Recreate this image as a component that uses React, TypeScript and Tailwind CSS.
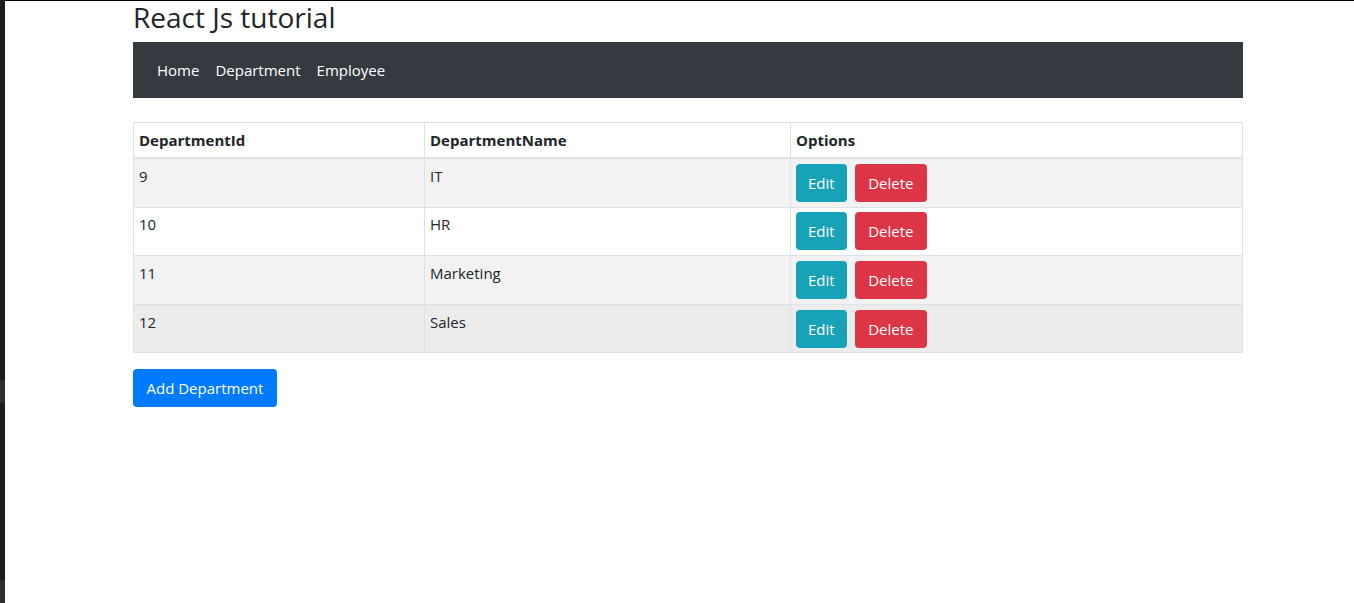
import React from 'react';

const departments = [
    { id: 9, name: 'IT' },
    { id: 10, name: 'HR' },
    { id: 11, name: 'Marketing' },
    { id: 12, name: 'Sales' },
];

const rowBg = (i: number) => {
    if (i === 3) return 'bg-[#ececec]';
    return i % 2 === 0 ? 'bg-[#f2f2f2]' : 'bg-white';
};

const App: React.FC = () => {
    return (
        <div className="flex min-h-[603px] bg-white text-[#212529] font-['Open_Sans',sans-serif] text-[15px]">
            <div className="flex w-[5px] flex-col bg-[#1c1c1c]">
                <div className="h-[380px]" />
                <div className="h-[23px] bg-[#2f2f2f]" />
                <div className="h-[177px]" />
                <div className="flex-1 bg-[#2f2f2f]" />
            </div>
            <div className="flex-1 border-t border-black pl-[128px]">
                <div className="w-[1110px]">
                    <h3 className="mb-2 text-[28px] font-medium leading-[33px]">React Js tutorial</h3>
                    <nav className="flex h-14 items-center bg-[#343a40] px-4">
                        <a className="px-2 py-2 leading-6 text-white">Home</a>
                        <a className="px-2 py-2 leading-6 text-white">Department</a>
                        <a className="px-2 py-2 leading-6 text-white">Employee</a>
                    </nav>
                    <table className="mt-6 mb-4 w-full border-collapse border border-[#dee2e6]">
                        <thead>
                            <tr>
                                <th className="w-[291px] border border-b-2 border-[#dee2e6] px-[5px] py-[5px] text-left font-bold leading-6">DepartmentId</th>
                                <th className="w-[366px] border border-b-2 border-[#dee2e6] px-[5px] py-[5px] text-left font-bold leading-6">DepartmentName</th>
                                <th className="border border-b-2 border-[#dee2e6] px-[5px] py-[5px] text-left font-bold leading-6">Options</th>
                            </tr>
                        </thead>
                        <tbody>
                            {departments.map((dep, i) => (
                                <tr key={dep.id} className={rowBg(i)}>
                                    <td className="border border-[#dee2e6] px-[5px] py-[4.8px] align-top leading-6">{dep.id}</td>
                                    <td className="border border-[#dee2e6] px-[5px] py-[4.8px] align-top leading-6">{dep.name}</td>
                                    <td className="border border-[#dee2e6] px-[5px] py-[4.8px] align-top leading-6">
                                        <div className="flex">
                                            <button className="mr-2 h-[38px] rounded bg-[#17a2b8] px-3 text-white">Edit</button>
                                            <button className="h-[38px] rounded bg-[#dc3545] px-[13.5px] text-white">Delete</button>
                                        </div>
                                    </td>
                                </tr>
                            ))}
                        </tbody>
                    </table>
                    <button className="h-[38px] rounded bg-[#007bff] px-[13.5px] text-white">Add Department</button>
                </div>
            </div>
        </div>
    );
};

export default App;
